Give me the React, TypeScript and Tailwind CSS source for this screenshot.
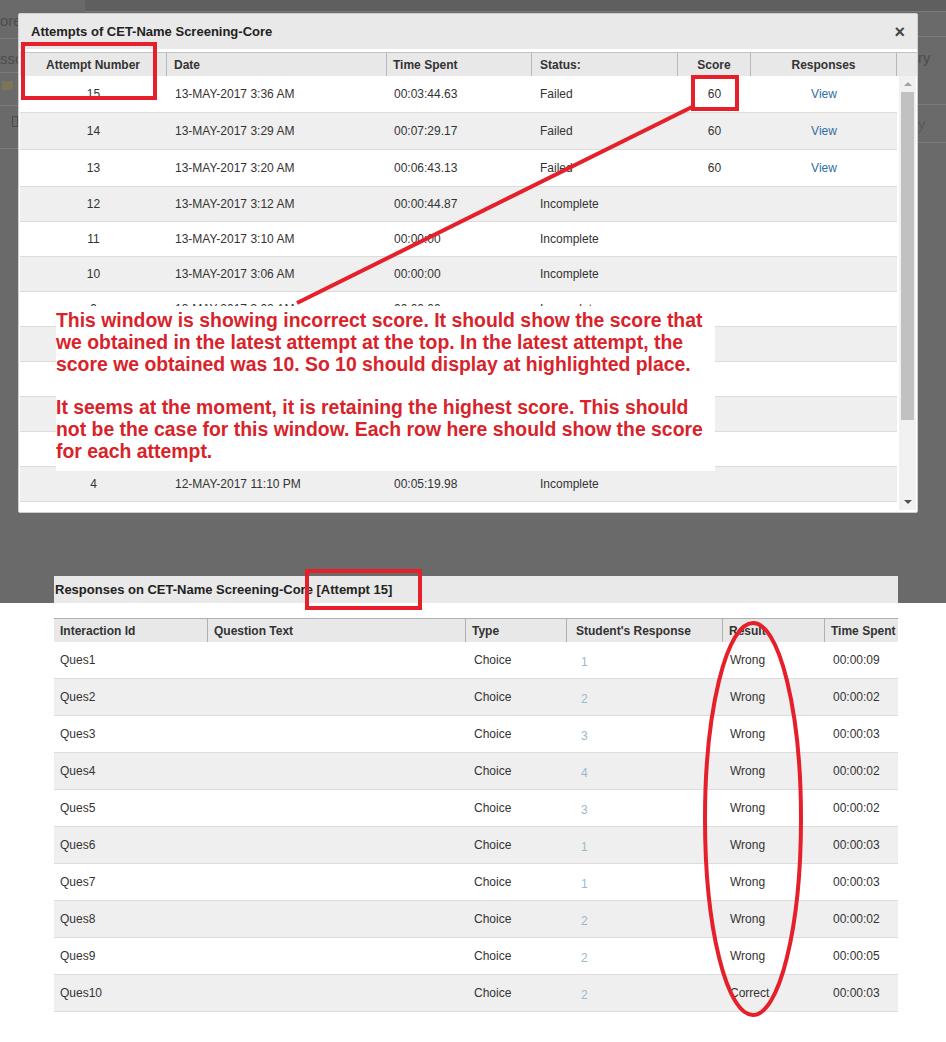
import React from "react";

type Attempt = {
  n?: number;
  date: string;
  time: string;
  status: string;
  score?: string;
  view?: boolean;
};

const attempts: Attempt[] = [
  { n: 15, date: "13-MAY-2017 3:36 AM", time: "00:03:44.63", status: "Failed", score: "60", view: true },
  { n: 14, date: "13-MAY-2017 3:29 AM", time: "00:07:29.17", status: "Failed", score: "60", view: true },
  { n: 13, date: "13-MAY-2017 3:20 AM", time: "00:06:43.13", status: "Failed", score: "60", view: true },
  { n: 12, date: "13-MAY-2017 3:12 AM", time: "00:00:44.87", status: "Incomplete" },
  { n: 11, date: "13-MAY-2017 3:10 AM", time: "00:00:00", status: "Incomplete" },
  { n: 10, date: "13-MAY-2017 3:06 AM", time: "00:00:00", status: "Incomplete" },
  { n: 9, date: "13-MAY-2017 3:02 AM", time: "00:00:00", status: "Incomplete" },
  { date: "", time: "", status: "" },
  { date: "", time: "", status: "" },
  { date: "", time: "", status: "" },
  { date: "", time: "", status: "" },
  { n: 4, date: "12-MAY-2017 11:10 PM", time: "00:05:19.98", status: "Incomplete" },
];

const responses = [
  { id: "Ques1", r: "1", res: "Wrong", t: "00:00:09" },
  { id: "Ques2", r: "2", res: "Wrong", t: "00:00:02" },
  { id: "Ques3", r: "3", res: "Wrong", t: "00:00:03" },
  { id: "Ques4", r: "4", res: "Wrong", t: "00:00:02" },
  { id: "Ques5", r: "3", res: "Wrong", t: "00:00:02" },
  { id: "Ques6", r: "1", res: "Wrong", t: "00:00:03" },
  { id: "Ques7", r: "1", res: "Wrong", t: "00:00:03" },
  { id: "Ques8", r: "2", res: "Wrong", t: "00:00:02" },
  { id: "Ques9", r: "2", res: "Wrong", t: "00:00:05" },
  { id: "Ques10", r: "2", res: "Correct", t: "00:00:03" },
];

const FONT = { fontFamily: '"Liberation Sans", Arial, sans-serif' };

function Backdrop() {
  return (
    <>
      <div className="absolute left-[85px] right-0 top-0 h-[12px] bg-[#5f5f5f] border-b border-[#7a7a7a]" />
      <div className="absolute left-0 top-[10px] text-[15px] text-[#4d4d4d]">ore</div>
      <div className="absolute left-0 top-[38px] w-[18px] h-px bg-[#7c7c7c]" />
      <div className="absolute left-0 top-[48px] text-[15px] text-[#4d4d4d]">ssc</div>
      <div className="absolute left-0 top-[72px] w-[18px] h-px bg-[#7c7c7c]" />
      <div className="absolute left-[2px] top-[81px] w-[11px] h-[9px] bg-[#7d7457] rounded-[1px]" />
      <div className="absolute left-0 top-[105px] w-[18px] h-px bg-[#7c7c7c]" />
      <div className="absolute left-[12px] top-[116px] w-[6px] h-[11px] border border-[#4d4d4d]" />
      <div className="absolute left-0 top-[148px] w-[18px] h-px bg-[#7c7c7c]" />
      <div className="absolute left-[918px] top-[36px] w-[28px] h-px bg-[#7c7c7c]" />
      <div className="absolute left-[918px] top-[47px] text-[15px] text-[#4d4d4d]">ry</div>
      <div className="absolute left-[918px] top-[104px] w-[28px] h-px bg-[#7c7c7c]" />
      <div className="absolute left-[918px] top-[113px] text-[15px] text-[#5a5a5a]">y</div>
      <div className="absolute left-[918px] top-[142px] w-[28px] h-px bg-[#7c7c7c]" />
    </>
  );
}

function AttemptsModal() {
  return (
    <div className="relative w-[900px] h-[500px] bg-white rounded-[2px] border border-[#cfcfcf] overflow-hidden">
      <div className="h-[35px] bg-[#e9e9e9] flex items-center justify-between pl-[12px] pr-[12px]">
        <span className="text-[13px] font-bold text-[#222]">Attempts of CET-Name Screening-Core</span>
        <span className="text-[18px] font-bold text-[#444] leading-none">×</span>
      </div>
      <div className="mt-[3px] pl-px">
        <div className="grid grid-cols-[147px_220px_145px_146px_73px_146px_20px] h-[24px] bg-[#e8e8e8] border-t border-[#c4c4c4] text-[12px] font-bold text-[#333]">
          <div className="flex items-center justify-center border-r border-[#b8b8b8]">Attempt Number</div>
          <div className="flex items-center pl-[7px] border-r border-[#b8b8b8]">Date</div>
          <div className="flex items-center pl-[6px] border-r border-[#b8b8b8]">Time Spent</div>
          <div className="flex items-center pl-[8px] border-r border-[#b8b8b8]">Status:</div>
          <div className="flex items-center justify-center border-r border-[#b8b8b8]">Score</div>
          <div className="flex items-center justify-center border-r border-[#b8b8b8]">Responses</div>
          <div />
        </div>
        <div className="flex">
          <div className="w-[877px]">
            {attempts.map((a, i) => (
              <div
                key={i}
                className={`grid grid-cols-[147px_220px_145px_146px_73px_146px] border-b border-[#dcdcdc] text-[12px] text-[#333] ${
                  i < 3 ? "h-[37px]" : "h-[35px]"
                } ${i % 2 === 1 ? "bg-[#efefef]" : "bg-white"}`}
              >
                <div className="flex items-center justify-center">{a.n ?? ""}</div>
                <div className="flex items-center pl-[8px]">{a.date}</div>
                <div className="flex items-center pl-[7px]">{a.time}</div>
                <div className="flex items-center pl-[8px]">{a.status}</div>
                <div className="flex items-center justify-center">{a.score ?? ""}</div>
                <div className="flex items-center justify-center text-[#2f6ea5]">{a.view ? "View" : ""}</div>
              </div>
            ))}
          </div>
          <div className="ml-[2px] w-[17px] h-[434px] bg-[#f1f1f1] flex flex-col items-center">
            <div className="h-[16px] flex items-center justify-center">
              <div className="w-0 h-0 border-l-[4px] border-r-[4px] border-b-[4px] border-l-transparent border-r-transparent border-b-[#a3a3a3]" />
            </div>
            <div className="w-[13px] h-[328px] bg-[#c1c1c1]" />
            <div className="flex-1" />
            <div className="h-[16px] flex items-center justify-center">
              <div className="w-0 h-0 border-l-[4px] border-r-[4px] border-t-[4px] border-l-transparent border-r-transparent border-t-[#505050]" />
            </div>
          </div>
        </div>
      </div>
      <div className="absolute left-[37px] top-[292px] w-[659px] h-[165px] bg-white pt-[4px] text-[19.4px] leading-[21.8px] font-bold text-[#d9232a]">
        <p>This window is showing incorrect score. It should show the score that we obtained in the latest attempt at the top. In the latest attempt, the score we obtained was 10. So 10 should display at highlighted place.</p>
        <p className="mt-[21.8px]">It seems at the moment, it is retaining the highest score. This should not be the case for this window. Each row here should show the score for each attempt.</p>
      </div>
    </div>
  );
}

function ResponsesPanel() {
  return (
    <div>
      <div className="flex h-[27px]">
        <div className="w-[54px] bg-[#6a6a6a]" />
        <div className="w-[844px] bg-[#e9e9e9] flex items-center pl-px text-[13px] font-bold text-[#222]">
          Responses on CET-Name Screening-Core [Attempt 15]
        </div>
        <div className="flex-1 bg-[#6a6a6a]" />
      </div>
      <div className="ml-[54px] mt-[15px] w-[844px]">
        <div className="grid grid-cols-[154px_258px_101px_156px_102px_73px] h-[24px] bg-[#e8e8e8] border-t border-[#b0b0b0] text-[12px] font-bold text-[#333]">
          <div className="flex items-center pl-[6px] border-r border-[#b0b0b0]">Interaction Id</div>
          <div className="flex items-center pl-[6px] border-r border-[#b0b0b0]">Question Text</div>
          <div className="flex items-center pl-[6px] border-r border-[#b0b0b0]">Type</div>
          <div className="flex items-center pl-[9px] border-r border-[#b0b0b0]">Student's Response</div>
          <div className="flex items-center pl-[6px] border-r border-[#b0b0b0]">Result</div>
          <div className="flex items-center pl-[6px] whitespace-nowrap">Time Spent</div>
        </div>
        {responses.map((r, i) => (
          <div
            key={r.id}
            className={`grid grid-cols-[154px_258px_101px_156px_102px_73px] h-[37px] border-b border-[#dcdcdc] text-[12px] text-[#333] ${
              i % 2 === 1 ? "bg-[#efefef]" : "bg-white"
            }`}
          >
            <div className="flex items-center pl-[6px]">{r.id}</div>
            <div />
            <div className="flex items-center pl-[8px]">Choice</div>
            <div className="flex items-center pl-[14px] pt-[3px] text-[#9bb8cc]">{r.r}</div>
            <div className="flex items-center pl-[7px]">{r.res}</div>
            <div className="flex items-center pl-[8px]">{r.t}</div>
          </div>
        ))}
      </div>
    </div>
  );
}

export default function App() {
  return (
    <div className="relative w-[946px] h-[1042px] bg-white overflow-hidden" style={FONT}>
      <div className="relative h-[576px] bg-[#6a6a6a] pt-[13px] pl-[18px]">
        <Backdrop />
        <AttemptsModal />
      </div>
      <ResponsesPanel />
      <svg className="absolute left-0 top-0 pointer-events-none" width="946" height="1042" viewBox="0 0 946 1042">
        <g fill="none" stroke="#e5202a" strokeWidth="4">
          <rect x="23" y="44" width="132" height="54" />
          <rect x="693" y="77" width="44" height="32" />
          <line x1="694" y1="106" x2="297" y2="303" />
          <rect x="307" y="571" width="113" height="37" />
          <ellipse cx="753" cy="819" rx="48" ry="196" />
        </g>
      </svg>
    </div>
  );
}
